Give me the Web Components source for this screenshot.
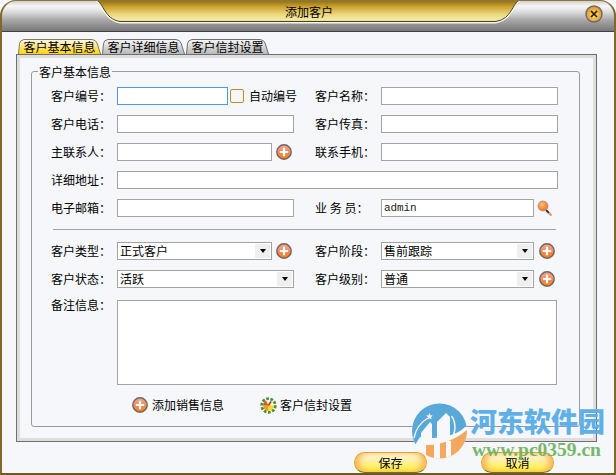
<!DOCTYPE html>
<html lang="zh"><head><meta charset="utf-8"><title>添加客户</title>
<style>
html,body{margin:0;padding:0;width:616px;height:475px;overflow:hidden;background:#f5f7fb}
body{font:12px/1 "Noto Sans CJK SC","Liberation Sans",sans-serif;color:#000}
.row{display:flex;align-items:center}
</style></head><body>
<customer-window heading="添加客户">
  <tab-strip slot="tabs" items="客户基本信息,客户详细信息,客户信封设置"></tab-strip>
  <group-box legend="客户基本信息">
    <form-grid>
      <form-label>客户编号：</form-label>
      <div class="row" style="white-space:nowrap"><text-box focused style="width:111px;flex:none"></text-box><check-box style="margin-left:2px"></check-box><span style="margin-left:5px;flex:none">自动编号</span></div>
      <form-label right>客户名称：</form-label><text-box></text-box>
      <form-label>客户电话：</form-label><text-box></text-box>
      <form-label right>客户传真：</form-label><text-box></text-box>
      <form-label>主联系人：</form-label>
      <div class="row"><text-box style="width:155px"></text-box><plus-icon style="margin-left:4px"></plus-icon></div>
      <form-label right>联系手机：</form-label><text-box></text-box>
      <form-label>详细地址：</form-label><text-box style="grid-column:2 / 5"></text-box>
      <form-label>电子邮箱：</form-label><text-box></text-box>
      <form-label right>业 务 员：</form-label>
      <div class="row"><text-box mono style="width:153px">admin</text-box><search-icon style="margin-left:3px"></search-icon></div>
    </form-grid>
    <h-rule></h-rule>
    <form-grid>
      <form-label>客户类型：</form-label>
      <div class="row"><drop-select style="width:155px">正式客户</drop-select><plus-icon style="margin-left:4px"></plus-icon></div>
      <form-label right>客户阶段：</form-label>
      <div class="row"><drop-select style="width:153px">售前跟踪</drop-select><plus-icon style="margin-left:5px"></plus-icon></div>
      <form-label>客户状态：</form-label><drop-select>活跃</drop-select>
      <form-label right>客户级别：</form-label>
      <div class="row"><drop-select style="width:153px">普通</drop-select><plus-icon style="margin-left:5px"></plus-icon></div>
      <form-label style="margin-top:-2px">备注信息：</form-label><text-box style="grid-column:2 / 5;height:85px;margin-top:2px;width:440px"></text-box>
    </form-grid>
    <link-row>
      <icon-link style="margin-left:100px"><plus-icon slot="icon"></plus-icon>添加销售信息</icon-link>
      <icon-link style="margin-left:36px"><gear-icon slot="icon"></gear-icon>客户信封设置</icon-link>
    </link-row>
  </group-box>
  <gold-button slot="actions">保存</gold-button>
  <gold-button slot="actions" style="margin-left:54px">取消</gold-button>
  <site-watermark slot="overlay"></site-watermark>
</customer-window>
<script>
function reg(name, css, html){
  customElements.define(name, class extends HTMLElement{
    connectedCallback(){
      if(this.shadowRoot) return;
      const r=this.attachShadow({mode:'open'});
      r.innerHTML='<style>'+css+'</style>'+(typeof html==='function'?html(this):html);
    }
  });
}
reg('customer-window',`
:host{display:block;position:relative;width:616px;height:475px;box-sizing:border-box;background:#f5f7fb;overflow:hidden}
.frame{position:absolute;inset:0;border:0 solid #806a2a;border-width:1px 2px 2px 2px;border-top-color:#8a7640;border-bottom-color:#6b5a28;border-radius:16px 16px 0 0;pointer-events:none;z-index:3}
.bar{position:relative;height:31px;border-bottom:1px solid #3f4246;border-radius:16px 16px 0 0;background:linear-gradient(#c9c7c2 0,#f7f7f7 6px,#dcdcdc 12px,#a8a8a8 20px,#7c7c7c 30px);display:flex;justify-content:center;box-sizing:content-box}
.gold{position:absolute;left:94px;top:0;width:428px;height:24px}
.title{position:relative;height:21px;line-height:24px;font-size:12px;color:#000;margin-left:2px}
.close{position:absolute;left:585px;top:5px;width:18px;height:18px}
.tabs{margin:7px 0 0 18px;height:15px}
.panel{margin:0 0 0 16px;width:581px;height:388px;box-sizing:border-box;border:1px solid #6f6f6f;background:#f5f7fb;position:relative}
.inner{box-sizing:border-box;height:100%;border:3px solid #dedede;padding:13px 15px 13px 11px}
.actions{margin:10px 0 0 354px;display:flex;height:21px}
.ov{position:absolute;inset:0;pointer-events:none;z-index:5}
`,h=>`<div class="bar"><svg class="gold" viewBox="0 0 428 24" aria-hidden="true"><defs><linearGradient id="g" x1="0" y1="0" x2="0" y2="1"><stop offset="0" stop-color="#8a6a12"/><stop offset=".3" stop-color="#c9a02c"/><stop offset=".65" stop-color="#ebd67c"/><stop offset=".9" stop-color="#f3e8a6"/><stop offset="1" stop-color="#eadb8a"/></linearGradient></defs>
<path d="M0,0 C8,3 8,20 26,23.5 H402 C420,20 420,3 428,0Z" fill="#f4f4f4"/>
<path d="M2,0 C10,3 10,19 26,21.5 H402 C418,19 418,3 426,0Z" fill="url(#g)" stroke="#4f4212" stroke-width="1"/></svg>
<div class="title">${h.getAttribute('heading')}</div>
<svg class="close" viewBox="0 0 18 18" aria-hidden="true"><defs><radialGradient id="c" cx=".5" cy=".55" r=".6"><stop offset="0" stop-color="#ffe27a"/><stop offset="1" stop-color="#d98a12"/></radialGradient></defs><circle cx="9" cy="9" r="8" fill="url(#c)" stroke="#6b6b6b" stroke-width="1.4"/><path d="M6,6 L12,12 M12,6 L6,12" stroke="#2a1a00" stroke-width="1.7"/></svg></div>
<div class="tabs"><slot name="tabs"></slot></div>
<div class="panel"><div class="inner"><slot></slot></div></div>
<div class="actions"><slot name="actions"></slot></div>
<div class="frame"></div><div class="ov"><slot name="overlay"></slot></div>`);
reg('tab-strip',`
:host{display:flex;height:15px;gap:1px}
.t{position:relative;width:83px;height:15px;text-align:center;line-height:16px;font-size:12px}
svg{position:absolute;left:0;top:0}
span{position:relative}
`,h=>{const items=h.getAttribute('items').split(',');return `<svg width="0" height="0" aria-hidden="true"><defs><linearGradient id="a" x1="0" y1="0" x2="0" y2="1"><stop offset="0" stop-color="#fbfaf2"/><stop offset=".4" stop-color="#ffe79a"/><stop offset="1" stop-color="#ffd410"/></linearGradient><linearGradient id="b" x1="0" y1="0" x2="0" y2="1"><stop offset="0" stop-color="#f6f6f6"/><stop offset="1" stop-color="#b9b9b9"/></linearGradient></defs></svg>`+items.map((t,i)=>`<div class="t"><svg width="83" height="15" aria-hidden="true"><path d="M.5,15 L1.5,4.5 Q2,1 6,.5 H74 Q78,1 79,4 L82.5,15" fill="url(#${i?'b':'a'})" stroke="${i?'#6e6e6e':'#8a7a4a'}"/></svg><span>${t}</span></div>`).join('')});
reg('group-box',`
:host{display:block;position:relative;box-sizing:border-box;width:549px;height:356px;border:1px solid #9a9a9a;border-radius:3px;padding:15px 0 0 19px}
.lg{position:absolute;left:6px;top:-7px;background:#f5f7fb;padding:0 1px;line-height:14px}
`,h=>`<div class="lg">${h.getAttribute('legend')}</div><slot></slot>`);
reg('form-grid',`:host{display:grid;grid-template-columns:66px 177px 87px 177px;row-gap:10px;grid-auto-rows:minmax(18px,auto);width:507px}`,`<slot></slot>`);
reg('form-label',`:host{display:block;line-height:18px;white-space:pre;color:#000}:host([right]){padding-left:21px}`,`<slot></slot>`);
reg('text-box',`
:host{display:block;box-sizing:border-box;height:18px;border:1px solid #a3a3a3;background:#fff;line-height:16px;padding-left:2px;font-size:11px}
:host([focused]){border-color:#4a9cf2}
:host([mono]){font-family:"Liberation Mono",monospace;letter-spacing:-.1px;color:#222}
`,`<slot></slot>`);
reg('check-box',`:host{display:block;box-sizing:border-box;width:14px;height:14px;flex:none;border:1px solid #c08a34;border-radius:2px;background:#f7f7f5}`,``);
reg('drop-select',`
:host{display:flex;box-sizing:border-box;height:18px;border:1px solid #a3a3a3;background:#fff;line-height:16px;padding-left:2px;justify-content:space-between;white-space:nowrap}
.a{width:15px;margin:1px;background:#efefef;display:flex;align-items:center;justify-content:center}
.a i{border:3.5px solid transparent;border-top:4px solid #000;border-bottom:0;display:block;width:0;height:0}
`,`<span><slot></slot></span><div class="a"><i></i></div>`);
reg('plus-icon',`:host{display:block;width:16px;height:16px;flex:none}svg{display:block}`,`<svg width="16" height="16" viewBox="0 0 16 16" aria-hidden="true"><defs><linearGradient id="p" x1="0" y1="0" x2="0" y2="1"><stop offset="0" stop-color="#f3a79a"/><stop offset=".5" stop-color="#f28c5c"/><stop offset="1" stop-color="#f77c10"/></linearGradient></defs><circle cx="8" cy="8" r="7.2" fill="url(#p)" stroke="#6f655e" stroke-width="1.4"/><path d="M8,3.8V12.2M3.8,8H12.2" stroke="#fff" stroke-width="2.2"/></svg>`);
reg('search-icon',`:host{display:block;width:16px;height:17px;flex:none}svg{display:block}`,`<svg width="16" height="17" viewBox="0 0 16 17" aria-hidden="true"><defs><radialGradient id="m" cx=".4" cy=".35" r=".7"><stop offset="0" stop-color="#ffc080"/><stop offset="1" stop-color="#f06a10"/></radialGradient></defs><path d="M9,10 L12,13" stroke="#333" stroke-width="2"/><path d="M12,13 L14.5,15.5" stroke="#f08a50" stroke-width="2"/><circle cx="6" cy="6" r="5" fill="url(#m)" stroke="#a88" stroke-width=".8"/></svg>`);
reg('gear-icon',`:host{display:block;width:17px;height:17px;flex:none}svg{display:block}`,`<svg width="17" height="17" viewBox="0 0 17 17" aria-hidden="true"><circle cx="8.5" cy="8.5" r="6.6" fill="none" stroke="#4c8f2e" stroke-width="3.2" stroke-dasharray="2.6 1.5"/><circle cx="8.5" cy="8.5" r="5.4" fill="#f8f6ea"/><path d="M8.5,8.5 L13.9,8.5 A5.4,5.4 0 0 1 8,13.9Z" fill="#f8d81e"/><path d="M8.5,8.5 L8,13.9 A5.4,5.4 0 0 1 3.1,8.5Z" fill="#e8a22a"/><path d="M8.5,8.5 L3.1,8.5 A5.4,5.4 0 0 1 6,3.7Z" fill="#c9601e"/><path d="M8.5,8.5 L11,4.4" stroke="#c02a12" stroke-width="1.6"/></svg>`);
reg('h-rule',`:host{display:block;height:1px;background:#a3a3a3;margin:12px 0 12px 2px;width:503px}`,``);
reg('link-row',`:host{display:flex;align-items:center;margin-top:11px;height:18px;margin-left:-19px}`,`<slot></slot>`);
reg('icon-link',`:host{display:inline-flex;align-items:center;gap:4px;white-space:nowrap;color:#000}::slotted(gear-icon){margin-right:-1px}`,`<slot name="icon"></slot><slot></slot>`);
reg('gold-button',`
:host{display:block;box-sizing:border-box;width:73px;height:21px;border:1.5px solid #e6a418;border-bottom:1.5px solid #7a6a30;border-radius:11px;text-align:center;line-height:19px;color:#000;background:linear-gradient(#fff8e0 0,#fff0a8 40%,#fff060 75%,#fde43a 100%);box-shadow:inset 6px 0 6px -2px #f6b45c,inset -6px 0 6px -2px #f6b45c}
`,`<slot></slot>`);
reg('site-watermark',`
:host{position:absolute;left:0;top:0;width:616px;height:475px;display:block}
.logo{position:absolute;left:408px;top:400px}
.cn{position:absolute;left:470px;top:405px;font:900 27px/32px "Noto Sans CJK SC",sans-serif;color:#59ade8;opacity:.95;white-space:nowrap}
.url{position:absolute;left:472px;top:440px;font:bold 19.5px/20px "Liberation Serif",serif;color:#6cb35c;opacity:.92;white-space:nowrap}
`,`<svg class="logo" width="64" height="62" viewBox="0 0 64 62" aria-hidden="true">
<defs><clipPath id="d"><circle cx="31.5" cy="31" r="27.5"/></clipPath></defs>
<g clip-path="url(#d)">
<rect x="0" y="0" width="64" height="62" fill="#f6f8fb"/>
<path d="M0,0 H64 V26 L57,27 C48,36 30,40 12,37 L4,50 L0,50Z" fill="#5aa8d8"/>
<path d="M18,45 C35,45 50,38 60,29 H64 V62 H18Z" fill="#f4a75e"/>
<path d="M26,43 h6 v20 h-6Z M38,41 h5 v22 h-5Z" fill="#f6f8fb"/>
<path d="M13,33 L22,22 L24,24 V40 H13Z" fill="#f6f8fb"/>
<path d="M29,41 V22 L38,13 L42,17 V38Z" fill="#f6f8fb"/>
<path d="M43.5,16 C48,22 48,32 44,37" fill="none" stroke="#f6f8fb" stroke-width="1.4"/>
<path d="M6,38 C8,28 13,22 20,18" fill="none" stroke="#f6f8fb" stroke-width="1.4"/>
<path d="M21.5,13 l1,2.2 2.3,.3 -1.7,1.6 .5,2.3 -2.1,-1.1 -2.1,1.1 .5,-2.3 -1.7,-1.6 2.3,-.3Z" fill="#f6f8fb"/>
</g></svg>
<div class="cn">河东软件园</div><div class="url">www.pc0359.cn</div>`);
</script>
</body></html>
